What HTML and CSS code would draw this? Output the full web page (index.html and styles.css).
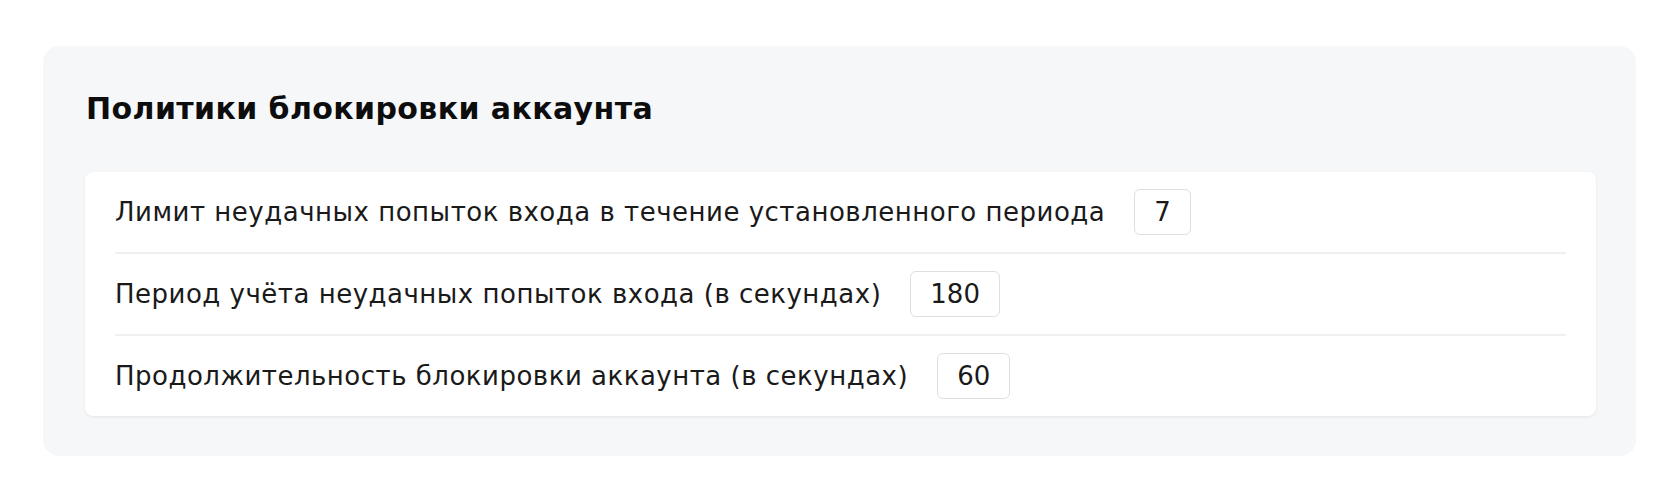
FILE: index.html
```html
<!DOCTYPE html>
<html lang="ru">
<head>
<meta charset="utf-8">
<link rel="stylesheet" href="styles.css">
</head>
<body>
<div class="page">
  <section class="panel">
    <h2 class="panel-title">Политики блокировки аккаунта</h2>
    <div class="card">
      <div class="row">
        <span class="row-label">Лимит неудачных попыток входа в течение установленного периода</span>
        <span class="value-box">7</span>
      </div>
      <div class="row">
        <span class="row-label">Период учёта неудачных попыток входа (в секундах)</span>
        <span class="value-box">180</span>
      </div>
      <div class="row">
        <span class="row-label">Продолжительность блокировки аккаунта (в секундах)</span>
        <span class="value-box">60</span>
      </div>
    </div>
  </section>
</div>
</body>
</html>
```

FILE: styles.css
```css
* { box-sizing: border-box; }
html, body { margin: 0; padding: 0; background: #ffffff; }
body {
  font-family: "DejaVu Sans", "Open Sans", sans-serif;
  color: #1a1a1a;
}
.page {
  padding: 46px 41px 36px 43px;
}
.panel {
  background: #f6f7f9;
  border-radius: 16px;
  padding: 36px 40px 40px 42px;
}
.panel-title {
  margin: 0 0 36px 1px;
  font-size: 30px;
  line-height: 54px;
  font-weight: 700;
  letter-spacing: 0.4px;
  color: #0d0d0d;
}
.card {
  background: #ffffff;
  border-radius: 8px;
  box-shadow: 0 1px 3px rgba(0, 0, 0, 0.08);
  padding: 0 30px;
}
.row {
  display: flex;
  align-items: center;
  gap: 29px;
  padding: 17px 0;
  border-bottom: 2px solid #eff0f2;
}
.row:last-child { border-bottom: none; }
.row-label {
  font-size: 26px;
  line-height: 32px;
  letter-spacing: 0.5px;
}
.value-box {
  display: inline-flex;
  align-items: center;
  justify-content: center;
  height: 46px;
  padding: 0 19px;
  border: 1.5px solid #dedfe1;
  border-radius: 6px;
  font-size: 26px;
}
```
